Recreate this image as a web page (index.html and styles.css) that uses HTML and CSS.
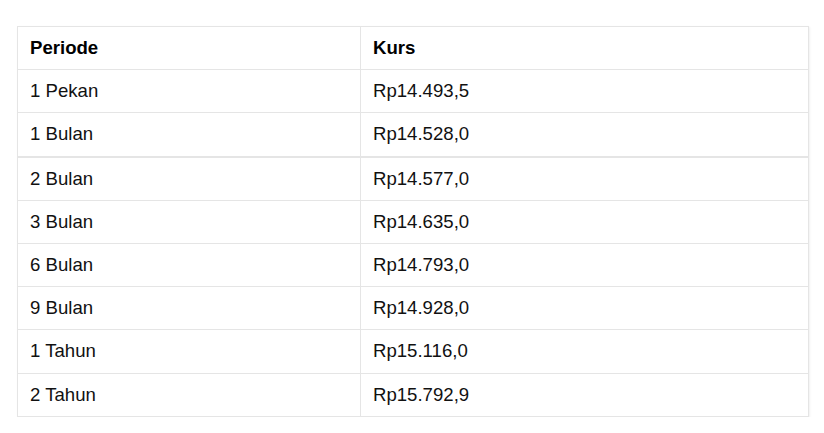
FILE: index.html
```html
<!DOCTYPE html>
<html>
<head>
<meta charset="utf-8">
<link rel="stylesheet" href="styles.css">
</head>
<body>
<div class="page">
<table class="rates">
<thead>
<tr><th class="col-period">Periode</th><th>Kurs</th></tr>
</thead>
<tbody>
<tr><td>1 Pekan</td><td>Rp14.493,5</td></tr>
<tr class="thick"><td>1 Bulan</td><td>Rp14.528,0</td></tr>
<tr><td>2 Bulan</td><td>Rp14.577,0</td></tr>
<tr><td>3 Bulan</td><td>Rp14.635,0</td></tr>
<tr><td>6 Bulan</td><td>Rp14.793,0</td></tr>
<tr><td>9 Bulan</td><td>Rp14.928,0</td></tr>
<tr><td>1 Tahun</td><td>Rp15.116,0</td></tr>
<tr><td>2 Tahun</td><td>Rp15.792,9</td></tr>
</tbody>
</table>
</div>
</body>
</html>
```
FILE: styles.css
```css
html, body {
  margin: 0;
  background: #fff;
}
.page {
  padding: 26px 15px 0 17px;
}
.rates {
  width: 792px;
  border-collapse: collapse;
  font-family: "Liberation Sans", Arial, sans-serif;
  font-size: 18.6px;
  color: #111;
  box-shadow: 1px 1px 2px rgba(0,0,0,0.06);
}
.rates th, .rates td {
  border: 1px solid #e5e5e5;
  padding: 11.1px 12px;
  line-height: 20px;
  text-align: left;
  vertical-align: middle;
}
.rates th {
  font-weight: bold;
  color: #000;
}
.col-period {
  width: 318px;
}
.rates tr.thick td {
  border-bottom: 2px solid #e5e5e5;
}
```
